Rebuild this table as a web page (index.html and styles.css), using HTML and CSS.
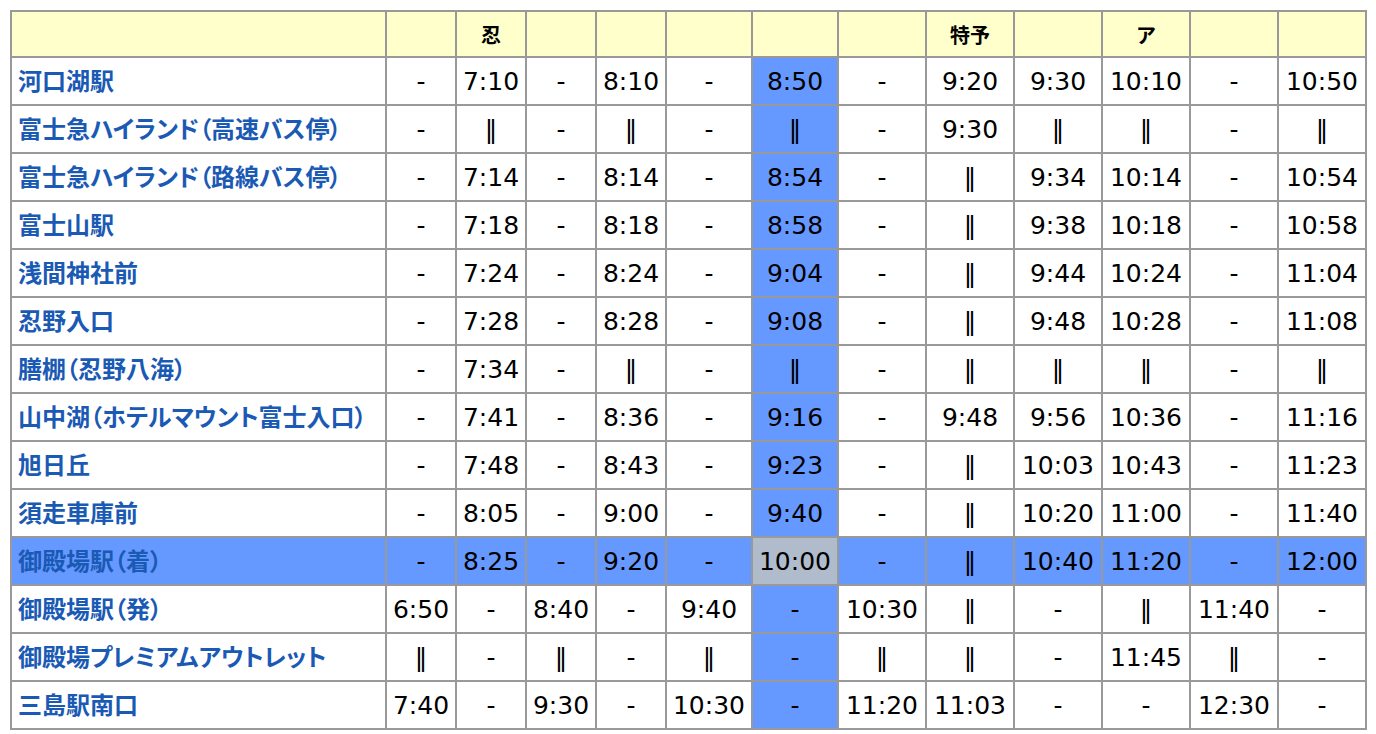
FILE: index.html
```html
<!DOCTYPE html>
<html lang="ja">
<head>
<meta charset="utf-8">
<title>時刻表</title>
<link rel="stylesheet" href="styles.css">
</head>
<body>
<table class="tt">
  <colgroup>
    <col class="c-stn">
    <col class="c-s"><col class="c-s"><col class="c-s"><col class="c-s">
    <col class="c-m"><col class="c-m">
    <col class="c-l"><col class="c-l"><col class="c-l"><col class="c-l"><col class="c-l"><col class="c-l">
  </colgroup>
  <thead>
    <tr class="head">
      <th></th><th></th><th>忍</th><th></th><th></th><th></th><th></th><th></th><th>特予</th><th></th><th>ア</th><th></th><th></th>
    </tr>
  </thead>
  <tbody>
    <tr><td class="stn">河口湖駅</td><td>-</td><td>7:10</td><td>-</td><td>8:10</td><td>-</td><td class="hl">8:50</td><td>-</td><td>9:20</td><td>9:30</td><td>10:10</td><td>-</td><td>10:50</td></tr>
    <tr><td class="stn">富士急ハイランド（高速バス停）</td><td>-</td><td>‖</td><td>-</td><td>‖</td><td>-</td><td class="hl">‖</td><td>-</td><td>9:30</td><td>‖</td><td>‖</td><td>-</td><td>‖</td></tr>
    <tr><td class="stn">富士急ハイランド（路線バス停）</td><td>-</td><td>7:14</td><td>-</td><td>8:14</td><td>-</td><td class="hl">8:54</td><td>-</td><td>‖</td><td>9:34</td><td>10:14</td><td>-</td><td>10:54</td></tr>
    <tr><td class="stn">富士山駅</td><td>-</td><td>7:18</td><td>-</td><td>8:18</td><td>-</td><td class="hl">8:58</td><td>-</td><td>‖</td><td>9:38</td><td>10:18</td><td>-</td><td>10:58</td></tr>
    <tr><td class="stn">浅間神社前</td><td>-</td><td>7:24</td><td>-</td><td>8:24</td><td>-</td><td class="hl">9:04</td><td>-</td><td>‖</td><td>9:44</td><td>10:24</td><td>-</td><td>11:04</td></tr>
    <tr><td class="stn">忍野入口</td><td>-</td><td>7:28</td><td>-</td><td>8:28</td><td>-</td><td class="hl">9:08</td><td>-</td><td>‖</td><td>9:48</td><td>10:28</td><td>-</td><td>11:08</td></tr>
    <tr><td class="stn">膳棚（忍野八海）</td><td>-</td><td>7:34</td><td>-</td><td>‖</td><td>-</td><td class="hl">‖</td><td>-</td><td>‖</td><td>‖</td><td>‖</td><td>-</td><td>‖</td></tr>
    <tr><td class="stn">山中湖（ホテルマウント富士入口）</td><td>-</td><td>7:41</td><td>-</td><td>8:36</td><td>-</td><td class="hl">9:16</td><td>-</td><td>9:48</td><td>9:56</td><td>10:36</td><td>-</td><td>11:16</td></tr>
    <tr><td class="stn">旭日丘</td><td>-</td><td>7:48</td><td>-</td><td>8:43</td><td>-</td><td class="hl">9:23</td><td>-</td><td>‖</td><td>10:03</td><td>10:43</td><td>-</td><td>11:23</td></tr>
    <tr><td class="stn">須走車庫前</td><td>-</td><td>8:05</td><td>-</td><td>9:00</td><td>-</td><td class="hl">9:40</td><td>-</td><td>‖</td><td>10:20</td><td>11:00</td><td>-</td><td>11:40</td></tr>
    <tr class="arr"><td class="stn">御殿場駅（着）</td><td>-</td><td>8:25</td><td>-</td><td>9:20</td><td>-</td><td class="cross">10:00</td><td>-</td><td>‖</td><td>10:40</td><td>11:20</td><td>-</td><td>12:00</td></tr>
    <tr><td class="stn">御殿場駅（発）</td><td>6:50</td><td>-</td><td>8:40</td><td>-</td><td>9:40</td><td class="hl">-</td><td>10:30</td><td>‖</td><td>-</td><td>‖</td><td>11:40</td><td>-</td></tr>
    <tr><td class="stn">御殿場プレミアムアウトレット</td><td>‖</td><td>-</td><td>‖</td><td>-</td><td>‖</td><td class="hl">-</td><td>‖</td><td>‖</td><td>-</td><td>11:45</td><td>‖</td><td>-</td></tr>
    <tr><td class="stn">三島駅南口</td><td>7:40</td><td>-</td><td>9:30</td><td>-</td><td>10:30</td><td class="hl">-</td><td>11:20</td><td>11:03</td><td>-</td><td>-</td><td>12:30</td><td>-</td></tr>
  </tbody>
</table>
</body>
</html>
```

FILE: styles.css
```css
html, body {
  margin: 0;
  padding: 0;
  background: #ffffff;
}

body {
  padding: 10px;
}

.tt {
  table-layout: fixed;
  width: 1357px;
  border-collapse: separate;
  border-spacing: 0;
  border-top: 2px solid #999999;
  border-left: 2px solid #999999;
  font-family: "DejaVu Sans", "Noto Sans CJK JP", sans-serif;
  font-size: 25px;
  color: #000000;
}

.c-stn { width: 375px; }
.c-s { width: 70px; }
.c-m { width: 86px; }
.c-l { width: 88px; }

.tt th,
.tt td {
  box-sizing: border-box;
  border-right: 2px solid #999999;
  border-bottom: 2px solid #999999;
  padding: 0;
  text-align: center;
  vertical-align: middle;
  white-space: nowrap;
}

.tt .head {
  height: 46px;
}

.tt .head th {
  background: #ffffcc;
  font-family: "Noto Sans CJK JP", sans-serif;
  font-weight: bold;
  font-size: 20px;
}

.tt tbody tr {
  height: 48px;
}

.tt td.stn {
  text-align: left;
  padding-left: 6px;
  padding-bottom: 3px;
  font-family: "Noto Sans CJK JP", sans-serif;
  font-feature-settings: "palt";
  font-weight: bold;
  font-size: 24px;
  line-height: 1;
  color: #1a5ab4;
}

.tt td.hl {
  background: #6699ff;
}

.tt tr.arr td {
  background: #6699ff;
}

.tt tr.arr td.cross {
  background: #b0bccc;
}
```
